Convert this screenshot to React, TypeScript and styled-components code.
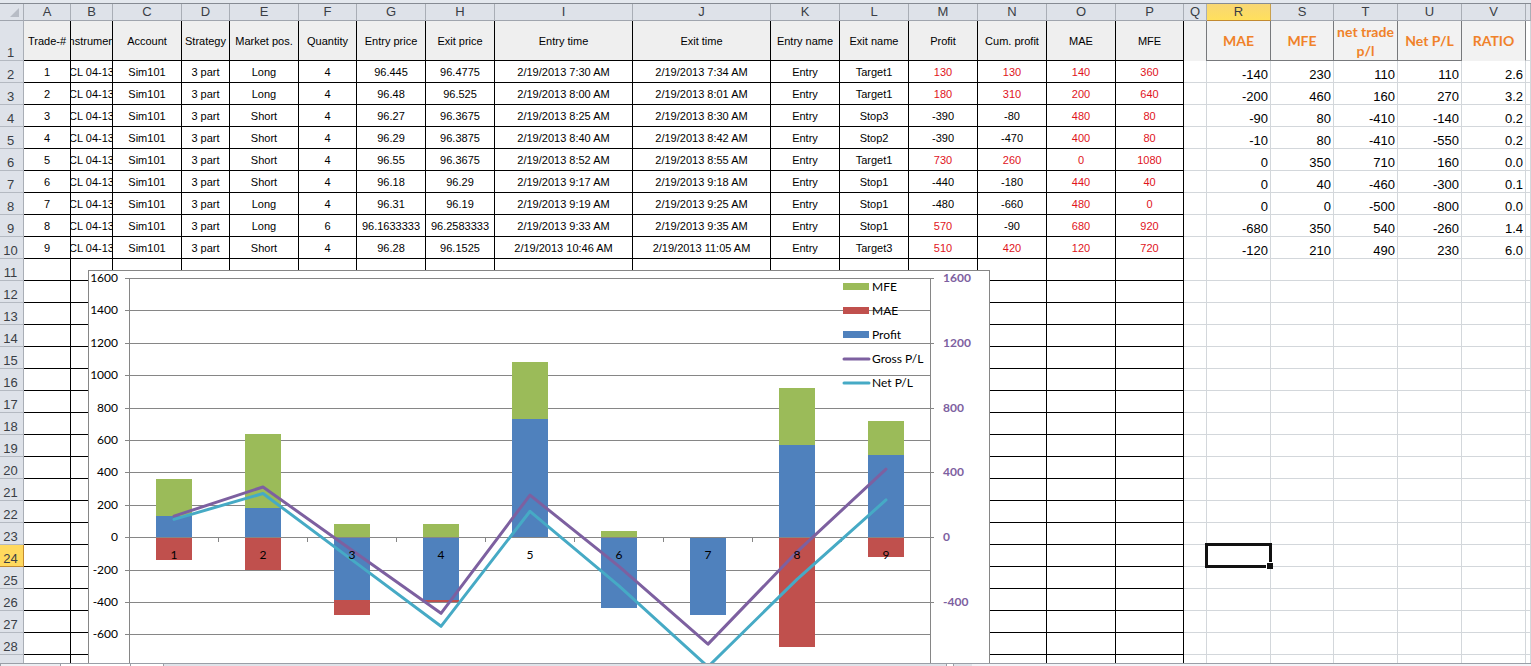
import React from "react";
import styled, { createGlobalStyle } from "styled-components";

const sans = `"Liberation Sans", Arial, sans-serif`;
const chartFont = `Lato, Calibri, sans-serif`;

const GlobalStyle = createGlobalStyle`
  * { box-sizing: border-box; }
  body { margin: 0; background: #fff; font-family: ${sans}; color: #000; }
`;

const Window = styled.div`
  height: 100vh;
  display: flex;
  flex-direction: column;
  overflow: hidden;
  background: #e4e8ee;
  padding-top: 3px;
`;

const Sheet = styled.main`
  position: relative;
  flex: 1;
  min-height: 0;
  overflow: hidden;
  background: #fff;
  border-top: 1px solid #868b93;
`;

const Grid = styled.table`
  width: 100%;
  table-layout: fixed;
  border-collapse: separate;
  border-spacing: 0;
`;

const Col = styled.col<{ $w?: number }>`
  width: ${(p) => (p.$w ? `${p.$w}px` : "auto")};
`;

const Letter = styled.th<{ $active?: boolean }>`
  height: 17px;
  padding: 0;
  font-size: 13px;
  line-height: 16px;
  font-weight: 400;
  color: #3a3e45;
  background: ${(p) => (p.$active ? "linear-gradient(#f8d674, #ffe05c)" : "#dee2e9")};
  border-right: 1px solid ${(p) => (p.$active ? "#c9a04c" : "#a9aeb6")};
  border-bottom: 1px solid ${(p) => (p.$active ? "#c28a30" : "#a0a5ae")};
`;

const Corner = styled(Letter)`
  text-align: right;
  vertical-align: bottom;
  svg { display: block; margin: 0 4px 3px auto; }
`;

const RowNumber = styled.th<{ $active?: boolean }>`
  height: 22px;
  padding: 0 2px 0 0;
  font-size: 13px;
  line-height: 15px;
  font-weight: 400;
  vertical-align: bottom;
  color: #3a3e45;
  background: ${(p) => (p.$active ? "#ffd95e" : "#dee2e9")};
  border-right: 1px solid ${(p) => (p.$active ? "#c28a30" : "#a9aeb6")};
  border-bottom: 1px solid ${(p) => (p.$active ? "#c28a30" : "#b4b9c1")};
`;

const LogHead = styled.th`
  height: 40px;
  padding: 0;
  font-size: 11px;
  font-weight: 400;
  background: #efefef;
  border-right: 1px solid #000;
  border-bottom: 1px solid #000;
  overflow: hidden;
`;

const Clip = styled.div`
  display: flex;
  justify-content: center;
  overflow: hidden;
  white-space: nowrap;
  line-height: 16px;
`;

const LogCell = styled.td<{ $red?: boolean }>`
  height: 22px;
  padding: 0;
  font-size: 11px;
  color: ${(p) => (p.$red ? "#e0131c" : "#000")};
  border-right: 1px solid #000;
  border-bottom: 1px solid #000;
`;

const SummaryHead = styled.th<{ $plain?: boolean }>`
  height: 40px;
  padding: 0;
  font-family: ${chartFont};
  font-size: 14px;
  line-height: 19px;
  font-weight: 700;
  color: #f0822a;
  background: #f2f2f2;
  border-right: 1px solid #77797c;
  border-bottom: 1px solid ${(p) => (p.$plain ? "#f2f2f2" : "#77797c")};
`;

const GapHead = styled.th`
  background: #f2f2f2;
  border-right: 1px solid #77797c;
`;

const PlainCell = styled.td`
  height: 22px;
  padding: 0 2px 0 0;
  font-size: 13px;
  line-height: 15px;
  text-align: right;
  vertical-align: bottom;
  border-right: 1px solid #d3d7db;
  border-bottom: 1px solid #d3d7db;
`;

const SelectedCell = styled(PlainCell)`
  position: relative;
`;

const Selection = styled.div`
  position: absolute;
  inset: -2px;
  border: 3px solid #111;
  &::after {
    content: "";
    position: absolute;
    right: -4px;
    bottom: -4px;
    width: 6px;
    height: 6px;
    background: #111;
    border-top: 1px solid #fff;
    border-left: 1px solid #fff;
  }
`;

const ChartBox = styled.figure`
  position: absolute;
  left: 88px;
  top: 266px;
  margin: 0;
  background: #fff;
  border: 1px solid #868686;
  svg { display: block; }
`;

const BottomBar = styled.footer`
  height: 3px;
  display: flex;
  border-top: 1px solid #9a9fa7;
  background: #dfe3e9;
`;

const BarPart = styled.div<{ $w?: number; $bg: string }>`
  flex: ${(p) => (p.$w ? `0 0 ${p.$w}px` : "1")};
  background: ${(p) => p.$bg};
`;

const BarTab = styled(BarPart)`
  border-left: 1px solid #9a9fa7;
  border-right: 1px solid #9a9fa7;
`;

const columns: [string, number?][] = [
  ["A", 47], ["B", 42], ["C", 69], ["D", 48], ["E", 69], ["F", 58], ["G", 69], ["H", 69],
  ["I", 138], ["J", 138], ["K", 69], ["L", 69], ["M", 69], ["N", 69], ["O", 69], ["P", 68],
  ["Q", 23], ["R", 64], ["S", 63], ["T", 64], ["U", 64], ["V", 64], [""],
];

const logHeads = [
  "Trade-#", "Instrument", "Account", "Strategy", "Market pos.", "Quantity", "Entry price", "Exit price",
  "Entry time", "Exit time", "Entry name", "Exit name", "Profit", "Cum. profit", "MAE", "MFE",
];
const summaryHeads = ["MAE", "MFE", "net trade p/l", "Net P/L", "RATIO"];

type Trade = {
  side: string; qty: number; entry: string; exit: string; entryTime: string; exitTime: string;
  exitName: string; profit: number; cum: number; mae: number; mfe: number; summary: string[];
};

const trade = (
  side: string, qty: number, entry: string, exit: string, t1: string, t2: string, exitName: string,
  profit: number, cum: number, mae: number, mfe: number, summary: string,
): Trade => ({
  side, qty, entry, exit, entryTime: `2/19/2013 ${t1} AM`, exitTime: `2/19/2013 ${t2} AM`,
  exitName, profit, cum, mae, mfe, summary: summary.split(" "),
});

const trades: Trade[] = [
  trade("Long", 4, "96.445", "96.4775", "7:30", "7:34", "Target1", 130, 130, 140, 360, "-140 230 110 110 2.6"),
  trade("Long", 4, "96.48", "96.525", "8:00", "8:01", "Target1", 180, 310, 200, 640, "-200 460 160 270 3.2"),
  trade("Short", 4, "96.27", "96.3675", "8:25", "8:30", "Stop3", -390, -80, 480, 80, "-90 80 -410 -140 0.2"),
  trade("Short", 4, "96.29", "96.3875", "8:40", "8:42", "Stop2", -390, -470, 400, 80, "-10 80 -410 -550 0.2"),
  trade("Short", 4, "96.55", "96.3675", "8:52", "8:55", "Target1", 730, 260, 0, 1080, "0 350 710 160 0.0"),
  trade("Short", 4, "96.18", "96.29", "9:17", "9:18", "Stop1", -440, -180, 440, 40, "0 40 -460 -300 0.1"),
  trade("Long", 4, "96.31", "96.19", "9:19", "9:25", "Stop1", -480, -660, 480, 0, "0 0 -500 -800 0.0"),
  trade("Long", 6, "96.1633333", "96.2583333", "9:33", "9:35", "Stop1", 570, -90, 680, 920, "-680 350 540 -260 1.4"),
  trade("Short", 4, "96.28", "96.1525", "10:46", "11:05", "Target3", 510, 420, 120, 720, "-120 210 490 230 6.0"),
];

const emptyRows = Array.from({ length: 19 }, (_, i) => i + 11);

const GREEN = "#9bbb59";
const RED = "#c0504d";
const BLUE = "#4f81bd";
const PURPLE = "#7d60a0";
const TEAL = "#46aac5";
const AXIS = "#868686";

const PLOT_LEFT = 40;
const PLOT_RIGHT = 841;
const STEP = 89;
const yOf = (v: number) => 7 + (1600 - v) * 0.162;
const xOf = (i: number) => PLOT_LEFT + 45 + i * STEP;

function Bar({ i, from, to, fill }: { i: number; from: number; to: number; fill: string }) {
  const top = Math.round(yOf(Math.max(from, to)));
  const bottom = Math.round(yOf(Math.min(from, to)));
  return <rect x={xOf(i) - 18} y={top} width={36} height={bottom - top} fill={fill} />;
}

function Chart() {
  const ticks = Array.from({ length: 14 }, (_, i) => 1600 - i * 200);
  const line = (vals: number[]) => vals.map((v, i) => `${xOf(i)},${yOf(v)}`).join(" ");
  const legend: [string, string, boolean][] = [
    ["MFE", GREEN, true], ["MAE", RED, true], ["Profit", BLUE, true],
    ["Gross P/L", PURPLE, false], ["Net P/L", TEAL, false],
  ];
  return (
    <ChartBox>
      <svg width="900" height="440" fontFamily={chartFont} fontSize="12" role="img" aria-label="Trade profit chart">
        <g stroke={AXIS} shapeRendering="crispEdges">
          {ticks.map((v) => (
            <line
              key={v}
              x1={PLOT_LEFT - 4}
              x2={v % 400 === 0 ? PLOT_RIGHT + 4 : PLOT_RIGHT}
              y1={Math.round(yOf(v)) + 0.5}
              y2={Math.round(yOf(v)) + 0.5}
            />
          ))}
          <line x1={PLOT_LEFT + 0.5} x2={PLOT_LEFT + 0.5} y1={7} y2={440} />
          <line x1={PLOT_RIGHT + 0.5} x2={PLOT_RIGHT + 0.5} y1={7} y2={440} />
        </g>
        {trades.map((t, i) => {
          const mae = Number(t.summary[0]);
          return (
            <g key={i} shapeRendering="crispEdges">
              <Bar i={i} from={0} to={t.profit} fill={BLUE} />
              <Bar i={i} from={Math.max(t.profit, 0)} to={t.mfe} fill={GREEN} />
              <Bar i={i} from={Math.min(t.profit, 0)} to={Math.min(t.profit, 0) + mae} fill={RED} />
            </g>
          );
        })}
        <g stroke={AXIS} shapeRendering="crispEdges">
          <line x1={PLOT_LEFT} x2={PLOT_RIGHT} y1={266.5} y2={266.5} />
          {trades.map((_, i) => (
            <line key={i} x1={PLOT_LEFT + i * STEP + 0.5} x2={PLOT_LEFT + i * STEP + 0.5} y1={266} y2={271} />
          ))}
        </g>
        <g fill="none" strokeWidth="3" strokeLinejoin="round" strokeLinecap="round">
          <polyline stroke={PURPLE} points={line(trades.map((t) => t.cum))} />
          <polyline stroke={TEAL} points={line(trades.map((t) => Number(t.summary[3])))} />
        </g>
        <g textAnchor="middle">
          {trades.map((_, i) => (
            <text key={i} x={xOf(i)} y={288}>{i + 1}</text>
          ))}
        </g>
        <g textAnchor="end">
          {ticks.map((v) => (
            <text key={v} x={29} y={Math.round(yOf(v)) + 4}>{v}</text>
          ))}
        </g>
        <g fill={PURPLE} fontWeight="700">
          {ticks.filter((v) => v % 400 === 0).map((v) => (
            <text key={v} x={854} y={Math.round(yOf(v)) + 4}>{v}</text>
          ))}
        </g>
        {legend.map(([label, color, block], i) => (
          <g key={label}>
            {block ? (
              <rect x={754} y={12 + i * 24} width={26} height={7} fill={color} />
            ) : (
              <line x1={755} x2={780} y1={16 + i * 24} y2={16 + i * 24} stroke={color} strokeWidth={3} strokeLinecap="round" />
            )}
            <text x={783} y={20 + i * 24}>{label}</text>
          </g>
        ))}
      </svg>
    </ChartBox>
  );
}

function LogRow({ t, n }: { t: Trade; n: number }) {
  const cells: (string | number)[] = [
    n, "CL 04-13", "Sim101", "3 part", t.side, t.qty, t.entry, t.exit, t.entryTime, t.exitTime, "Entry", t.exitName,
  ];
  const results = [t.profit, t.cum, t.mae, t.mfe];
  return (
    <tr>
      <RowNumber scope="row">{n + 1}</RowNumber>
      {cells.map((c, i) => (
        <LogCell key={i}><Clip>{c}</Clip></LogCell>
      ))}
      {results.map((v, i) => (
        <LogCell key={i} $red={v >= 0}><Clip>{v}</Clip></LogCell>
      ))}
      <PlainCell />
      {t.summary.map((v, i) => (
        <PlainCell key={i}>{v}</PlainCell>
      ))}
      <PlainCell />
    </tr>
  );
}

export default function App() {
  return (
    <Window>
      <GlobalStyle />
      <Sheet>
        <Grid>
          <colgroup>
            <Col $w={24} />
            {columns.map(([name, w]) => <Col key={name} $w={w} />)}
          </colgroup>
          <thead>
            <tr>
              <Corner>
                <svg width="9" height="9" aria-hidden="true"><path d="M9 0V9H0Z" fill="#b7bcc5" /></svg>
              </Corner>
              {columns.map(([name]) => (
                <Letter key={name} scope="col" $active={name === "R"}>{name}</Letter>
              ))}
            </tr>
          </thead>
          <tbody>
            <tr>
              <RowNumber scope="row">1</RowNumber>
              {logHeads.map((h) => <LogHead key={h}><Clip>{h}</Clip></LogHead>)}
              <GapHead />
              {summaryHeads.map((h) => <SummaryHead key={h} $plain={h === "RATIO"}>{h}</SummaryHead>)}
              <PlainCell />
            </tr>
            {trades.map((t, i) => <LogRow key={i} t={t} n={i + 1} />)}
            {emptyRows.map((n) => (
              <tr key={n}>
                <RowNumber scope="row" $active={n === 24}>{n < 29 ? n : ""}</RowNumber>
                {logHeads.map((h) => <LogCell key={h} />)}
                <PlainCell />
                {n === 24 ? <SelectedCell><Selection /></SelectedCell> : <PlainCell />}
                {columns.slice(18).map(([name]) => <PlainCell key={name} />)}
              </tr>
            ))}
          </tbody>
        </Grid>
        <Chart />
      </Sheet>
      <BottomBar>
        <BarTab $w={61} $bg="#eceef2" />
        <BarPart $w={69} $bg="#ffffff" />
        <BarTab $w={34} $bg="#ffffff" />
        <BarPart $w={782} $bg="#dfe3e9" />
        <BarTab $w={8} $bg="#ffffff" />
        <BarPart $w={18} $bg="#dfe3e9" />
        <BarPart $bg="#f3f4f8" />
      </BottomBar>
    </Window>
  );
}
